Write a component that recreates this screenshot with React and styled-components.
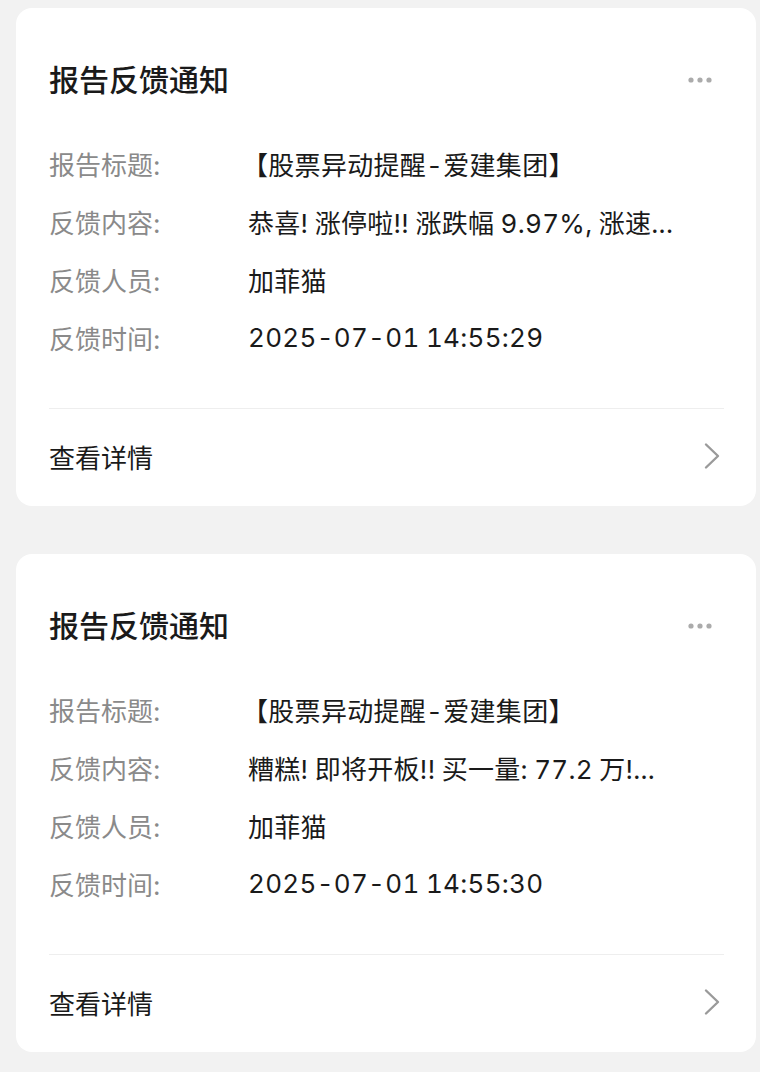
import React from 'react';
import styled, { createGlobalStyle } from 'styled-components';

const GlobalStyle = createGlobalStyle`
  body {
    margin: 0;
    background: #f2f2f2;
    font-family: "Inter", "Noto Sans CJK SC", sans-serif;
    -webkit-font-smoothing: antialiased;
  }
`;

const Page = styled.div`
  display: flex;
  flex-direction: column;
  gap: 48px;
  padding: 8px 4px 20px 16px;
`;

const Card = styled.div`
  background: #ffffff;
  border-radius: 16px;
  padding: 0 32px 0 33px;
`;

const Header = styled.div`
  display: flex;
  align-items: center;
  justify-content: space-between;
  padding-top: 48px;
  height: 48px;
`;

const Title = styled.div`
  font-size: 30px;
  font-weight: 500;
  color: #1a1a1a;
  line-height: 48px;
`;

const Fields = styled.div`
  display: flex;
  flex-direction: column;
  margin-top: 30px;
  padding-bottom: 42px;
  border-bottom: 1px solid #eeeeee;
`;

const Row = styled.div`
  display: flex;
  align-items: center;
  height: 58px;
  font-size: 26px;
`;

const Label = styled.span`
  flex: 0 0 199px;
  color: #8a8a8a;
`;

const Value = styled.span`
  flex: 1;
  min-width: 0;
  color: #1a1a1a;
  white-space: nowrap;
  overflow: hidden;
  text-overflow: ellipsis;
  font-variant-numeric: tabular-nums;
  letter-spacing: 0.3px;
  word-spacing: -1px;
  margin-left: ${p => (p.bracket ? '-6px' : '0')};
`;

const Footer = styled.div`
  display: flex;
  align-items: center;
  justify-content: space-between;
  height: 94px;
  padding-bottom: 3px;
  font-size: 26px;
  color: #1a1a1a;
`;

const MoreIcon = () => (
  <svg width="48" height="24" viewBox="0 0 48 24">
    <circle cx="15" cy="12" r="2.6" fill="#ababab" />
    <circle cx="24" cy="12" r="2.6" fill="#ababab" />
    <circle cx="33" cy="12" r="2.6" fill="#ababab" />
  </svg>
);

const Chevron = () => (
  <svg width="24" height="28" viewBox="0 0 24 28">
    <polyline
      points="6,2.5 18,14 6,25.5"
      fill="none"
      stroke="#9a9a9a"
      strokeWidth="2.4"
      strokeLinecap="round"
      strokeLinejoin="round"
    />
  </svg>
);

const notices = [
  {
    content: '恭喜! 涨停啦!! 涨跌幅 9.97%, 涨速...',
    time: '2025-07-01 14:55:29',
  },
  {
    content: '糟糕! 即将开板!! 买一量: 77.2 万!...',
    time: '2025-07-01 14:55:30',
  },
];

const NoticeCard = ({ content, time }) => (
  <Card>
    <Header>
      <Title>报告反馈通知</Title>
      <MoreIcon />
    </Header>
    <Fields>
      <Row>
        <Label>报告标题:</Label>
        <Value bracket>【股票异动提醒-爱建集团】</Value>
      </Row>
      <Row>
        <Label>反馈内容:</Label>
        <Value>{content}</Value>
      </Row>
      <Row>
        <Label>反馈人员:</Label>
        <Value>加菲猫</Value>
      </Row>
      <Row>
        <Label>反馈时间:</Label>
        <Value>{time}</Value>
      </Row>
    </Fields>
    <Footer>
      <span>查看详情</span>
      <Chevron />
    </Footer>
  </Card>
);

export default function App() {
  return (
    <>
      <GlobalStyle />
      <Page>
        {notices.map(n => (
          <NoticeCard key={n.time} {...n} />
        ))}
      </Page>
    </>
  );
}
